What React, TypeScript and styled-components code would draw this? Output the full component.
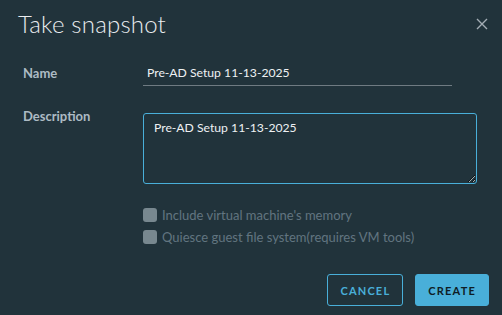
import styled, { createGlobalStyle } from "styled-components";

const GlobalStyle = createGlobalStyle`
  html, body {
    margin: 0;
    padding: 0;
    background: #21333b;
  }
  body {
    font-family: Lato, "Open Sans", sans-serif;
  }
`;

// Modal shell
const Modal = styled.div`
  width: 502px;
  height: 315px;
  box-sizing: border-box;
  background: #21333b;
  display: flex;
  flex-direction: column;
  overflow: hidden;
`;

const Header = styled.div`
  display: flex;
  align-items: flex-start;
  justify-content: space-between;
  padding: 9px 13px 0 18px;
`;

const Title = styled.h1`
  margin: 0;
  font-size: 24px;
  line-height: 29px;
  font-weight: 300;
  color: #e9ecef;
  letter-spacing: 0.2px;
`;

const CloseButton = styled.button`
  background: none;
  border: none;
  padding: 0;
  margin-top: 8px;
  width: 14px;
  height: 14px;
  display: flex;
  cursor: pointer;
`;

const Body = styled.div`
  padding: 25px 26px 0 23px;
  display: flex;
  flex-direction: column;
`;

const Row = styled.div<{ top?: number }>`
  display: grid;
  grid-template-columns: 120px 1fr;
  align-items: start;
  margin-top: ${(p) => p.top ?? 0}px;
`;

const Label = styled.label`
  font-size: 13px;
  font-weight: 700;
  color: #adbbc4;
  line-height: 20px;
`;

const TextInput = styled.input`
  width: 309px;
  box-sizing: border-box;
  background: transparent;
  border: none;
  border-bottom: 1px solid #6f7b82;
  color: #eef1f3;
  font-family: inherit;
  font-size: 12.2px;
  font-weight: 400;
  padding: 0 4px 3px;
  height: 23px;
  outline: none;
`;

const TextArea = styled.textarea`
  width: 334px;
  height: 71px;
  box-sizing: border-box;
  background: transparent;
  border: 1px solid #49afd9;
  border-radius: 3px;
  color: #eef1f3;
  font-family: inherit;
  font-size: 12.2px;
  font-weight: 400;
  padding: 6px 10px;
  outline: none;
  resize: vertical;
  margin-top: 7px;
`;

const Options = styled.div`
  display: flex;
  flex-direction: column;
  gap: 8px;
  margin: 24px 0 0 120px;
`;

const CheckRow = styled.label`
  display: flex;
  align-items: center;
  gap: 5px;
  font-size: 13px;
  color: #617580;
  line-height: 14px;
`;

const Box = styled.span`
  width: 14px;
  height: 14px;
  border-radius: 3px;
  background: #78888f;
  flex: none;
`;

const Footer = styled.div`
  display: flex;
  justify-content: flex-end;
  gap: 12px;
  padding: 0 13px 0 0;
  margin-top: 30px;
`;

const Button = styled.button<{ primary?: boolean }>`
  height: 32px;
  box-sizing: border-box;
  padding: 0 12px;
  border-radius: 3px;
  border: 1px solid #49afd9;
  background: ${(p) => (p.primary ? "#49afd9" : "transparent")};
  color: ${(p) => (p.primary ? "#0f1d24" : "#49afd9")};
  font-family: inherit;
  font-size: 11px;
  font-weight: 700;
  letter-spacing: 1.2px;
  text-transform: uppercase;
  cursor: pointer;
`;

export default function App() {
  return (
    <>
      <GlobalStyle />
      <Modal>
        <Header>
          <Title>Take snapshot</Title>
          <CloseButton aria-label="Close">
            <svg width="14" height="14" viewBox="0 0 14 14">
              <path d="M2 2 L12 12 M12 2 L2 12" stroke="#a3adb4" strokeWidth="1.4" />
            </svg>
          </CloseButton>
        </Header>
        <Body>
          <Row>
            <Label>Name</Label>
            <TextInput defaultValue="Pre-AD Setup 11-13-2025" />
          </Row>
          <Row top={20}>
            <Label>Description</Label>
            <TextArea defaultValue="Pre-AD Setup 11-13-2025" />
          </Row>
          <Options>
            <CheckRow>
              <Box />
              Include virtual machine's memory
            </CheckRow>
            <CheckRow>
              <Box />
              Quiesce guest file system(requires VM tools)
            </CheckRow>
          </Options>
        </Body>
        <Footer>
          <Button>Cancel</Button>
          <Button primary>Create</Button>
        </Footer>
      </Modal>
    </>
  );
}
